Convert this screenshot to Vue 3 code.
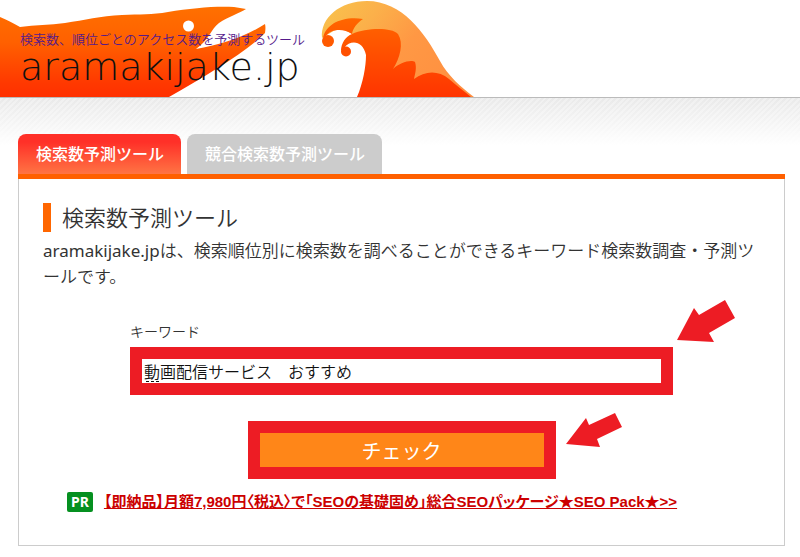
<script setup>
import { ref } from 'vue'

const keyword = ref('動画配信サービス　おすすめ')
</script>

<template>
  <div class="page">
    <header class="header">
      <svg class="art" viewBox="0 0 480 97" aria-hidden="true">
        <defs>
          <linearGradient id="fish" x1="0" y1="0" x2="0" y2="1">
            <stop offset="0" stop-color="#ff7000" />
            <stop offset="0.4" stop-color="#ff6000" />
            <stop offset="0.85" stop-color="#ff3800" />
            <stop offset="1" stop-color="#ff3000" />
          </linearGradient>
          <linearGradient id="crest" x1="0" y1="0.2" x2="1" y2="0.7">
            <stop offset="0" stop-color="#f9bf4c" />
            <stop offset="0.25" stop-color="#fbb04a" />
            <stop offset="0.55" stop-color="#ff9844" />
            <stop offset="1" stop-color="#ff8f40" />
          </linearGradient>
          <linearGradient id="wave" gradientUnits="userSpaceOnUse" x1="0" y1="18" x2="0" y2="97">
            <stop offset="0" stop-color="#ff6600" />
            <stop offset="1" stop-color="#ff3400" />
          </linearGradient>
        </defs>
        <path fill="url(#fish)" d="M0 17 C8 20 14 24 20 27 C35 25 50 25 65 23 C85 20 100 16 122 15 C140 14 152 15 168 12 C192 8 215 6 234 7 L246 9 C240 13 228 17 219 23 C211 29 209 40 196 49 C220 45 245 37 265 24 C266 28 265 32 265 33 C245 53 205 76 169 97 L0 97 Z" />
        <circle cx="188.500" cy="26" r="5.500" fill="#fff" />
        <path fill="url(#crest)" d="M322 38 C320 18 340 1 367 1 C402 1 425 33 440 61 C448 76 461 87 474 97 L400 97 L380 50 L352 34 L340 27 Z" />
        <path fill="url(#wave)" d="M323 38 C326 24 342 16 363 19 C357 23 353 28 352 34 C343 28 331 29 326 36 Z" />
        <path fill="url(#wave)" d="M341 51 C341 43 346 36 352 34 C366 28 391 27 398 34 C404 43 400 58 393 69 C399 63 411 59 415 62 C417 68 415 74 414 79 C425 71 438 70 449 79 C457 86 465 92 471 97 L357 97 C363 83 366 66 366 55 C363 41 351 39 344 48 Z" />
        <circle cx="328" cy="41" r="6" fill="#ff5a00" />
        <circle cx="346" cy="51.500" r="5" fill="#ff4f00" />
      </svg>
      <a class="brand" href="#">
        <span class="tagline">検索数、順位ごとのアクセス数を予測するツール</span>
        <span class="logo">aramakijake.jp</span>
      </a>
    </header>

    <main class="main">
      <nav class="tabs">
        <a class="tab active" href="#">検索数予測ツール</a>
        <a class="tab" href="#">競合検索数予測ツール</a>
      </nav>
      <section class="panel">
        <h1 class="title">検索数予測ツール</h1>
        <p class="lead"><span class="site">aramakijake.jp</span>は、検索順位別に検索数を調べることができるキーワード検索数調査・予測ツールです。</p>

        <form class="form" @submit.prevent>
          <label class="label" for="keyword">キーワード</label>
          <div class="field">
            <input id="keyword" v-model="keyword" class="input" type="text" />
            <span class="composing"></span>
            <svg class="arrow arrow-field" viewBox="0 0 58 42" aria-hidden="true">
              <path fill="#ed1c24" d="M0 40 L17 8 L22 15 L48 0 L58 18 L32 33 L37 42 Z" />
            </svg>
          </div>
          <div class="submit">
            <button class="button" type="submit">チェック</button>
            <svg class="arrow arrow-submit" viewBox="0 0 56 34" aria-hidden="true">
              <path fill="#ed1c24" d="M0 31 L20 5 L23 12 L49 0 L56 14 L31 26 L34 34 Z" />
            </svg>
          </div>
        </form>

        <p class="promo">
          <span class="badge">PR</span>
          <a class="promo-link" href="#">【即納品】月額7,980円〈税込〉で「SEOの基礎固め」総合SEOパッケージ★SEO Pack★&gt;&gt;</a>
        </p>
      </section>
    </main>
  </div>
</template>

<style>
body {
  margin: 0;
  background: #fff;
}
</style>

<style scoped>
.page {
  font-family: "Noto Sans", "Noto Sans CJK JP", sans-serif;
  font-weight: 350;
  color: #333;
  background:
    linear-gradient(to bottom, transparent 97px, rgba(255, 255, 255, 0) 97px, #fff 145px),
    repeating-linear-gradient(135deg, #e9e9e9 0 2px, #f0f0f0 2px 4px);
}

.header {
  position: relative;
  height: 97px;
  background: #fff;
  border-bottom: 1px solid #bbb;
}

.art {
  position: absolute;
  top: 0;
  left: 0;
  width: 480px;
  height: 97px;
}

.brand {
  position: relative;
  display: flex;
  flex-direction: column;
  padding: 30px 0 0 20px;
  text-decoration: none;
}

.tagline {
  font-size: 13px;
  line-height: 18px;
  color: #551a8b;
}

.logo {
  font-family: "DejaVu Sans", sans-serif;
  font-weight: 200;
  font-size: 38px;
  line-height: 38px;
  color: #111;
}

.main {
  padding: 36px 15px 10px 18px;
}

.tabs {
  display: flex;
  gap: 6px;
  border-bottom: 5px solid #ff6000;
}

.tab {
  padding: 0 17px 0 18px;
  border-radius: 8px 8px 0 0;
  background: #ccc;
  color: #fff;
  font-size: 16px;
  line-height: 40px;
  font-weight: 500;
  text-decoration: none;
}

.tab.active {
  background: linear-gradient(to bottom, #ff3028 20%, #ff7444);
}

.panel {
  padding: 24px;
  border: 1px solid #ccc;
  border-top: 0;
  background: #fff;
}

.title {
  margin: 0 0 6px;
  padding-left: 11px;
  border-left: 8px solid #ff6600;
  font-size: 22px;
  line-height: 29px;
  font-weight: 350;
}

.lead {
  margin: 0;
  font-size: 17px;
  line-height: 26px;
  line-break: loose;
}

.site {
  font-weight: 400;
}

.form {
  display: flex;
  flex-direction: column;
  max-width: 543px;
  margin: 32px auto 0;
}

.label {
  font-size: 14px;
  line-height: 20px;
}

.field {
  position: relative;
  display: flex;
  margin-top: 5px;
}

.input {
  flex: 1;
  min-width: 0;
  box-sizing: border-box;
  height: 48px;
  padding: 0 2px;
  border: 12px solid #ed1c24;
  border-radius: 0;
  background: #fff;
  color: #111;
  font: 350 16px "Noto Sans", "Noto Sans CJK JP", sans-serif;
  outline: none;
}

.composing {
  position: absolute;
  left: 16px;
  bottom: 13px;
  width: 13px;
  border-bottom: 1px dashed #111;
}

.submit {
  position: relative;
  align-self: center;
  margin-top: 26px;
}

.button {
  display: block;
  width: 308px;
  height: 58px;
  padding: 0;
  border: 12px solid #ed1c24;
  background: #ff8618;
  color: #fff;
  font: 400 20px "Noto Sans", "Noto Sans CJK JP", sans-serif;
}

.arrow {
  position: absolute;
  left: 100%;
}

.arrow-field {
  bottom: 100%;
  width: 58px;
  height: 42px;
  margin: 0 0 5px 4px;
}

.arrow-submit {
  top: -8px;
  width: 56px;
  height: 34px;
  margin-left: 10px;
}

.promo {
  display: flex;
  align-items: center;
  gap: 11px;
  margin: 13px 0 9px 24px;
  line-height: 20px;
}

.badge {
  padding: 0 4px;
  border-radius: 2px;
  background: #059020;
  color: #fff;
  font-size: 14px;
  font-weight: 700;
}

.promo-link {
  color: #c00;
  font-family: "Liberation Sans", "Noto Sans CJK JP", sans-serif;
  font-size: 15px;
  font-weight: 700;
  font-feature-settings: "palt";
}
</style>
